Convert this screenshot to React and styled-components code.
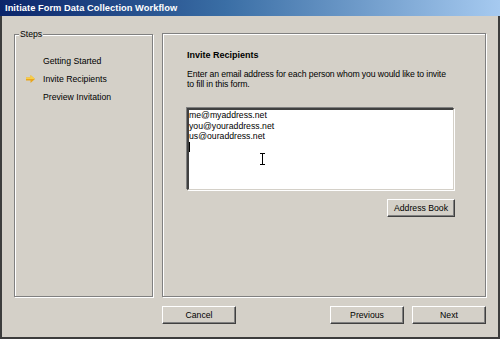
import React from 'react';
import styled, { createGlobalStyle } from 'styled-components';

const Global = createGlobalStyle`
  html, body { margin: 0; padding: 0; background: #d4d0c8; }
  body { font-family: "Liberation Sans", Arial, sans-serif; }
`;

const FACE = '#d4d0c8';

export default function App() {
  return (
    <>
      <Global />
      <Window>
        <TitleBar>Initiate Form Data Collection Workflow</TitleBar>
        <Body>
          <StepsBox>
            <Legend>Steps</Legend>
            <StepList>
              <Step>
                <Marker />
                Getting Started
              </Step>
              <Step>
                <Marker>
                  <svg width="9" height="8" viewBox="0 0 9 8">
                    <path d="M0 2.5h4.5V0L9 4 4.5 8V5.5H0z" fill="#e9a51c" />
                    <path d="M0 2.5h4.5V0L9 4H0z" fill="#f7cf4a" />
                  </svg>
                </Marker>
                Invite Recipients
              </Step>
              <Step>
                <Marker />
                Preview Invitation
              </Step>
            </StepList>
          </StepsBox>

          <Panel>
            <Heading>Invite Recipients</Heading>
            <Description>
              Enter an email address for each person whom you would like to invite
              <br />
              to fill in this form.
            </Description>
            <AddressField>
              <Line>me@myaddress.net</Line>
              <Line>you@youraddress.net</Line>
              <Line>us@ouraddress.net</Line>
              <Line>
                <Caret />
              </Line>
              <IBeam width="7" height="12" viewBox="0 0 7 12">
                <path d="M1 0.5h5M3.5 0.5v11M1 11.5h5" stroke="#000" strokeWidth="1" fill="none" />
              </IBeam>
            </AddressField>
            <FieldActions>
              <Button $width={68}>Address Book</Button>
            </FieldActions>
          </Panel>

          <Footer>
            <Button $width={74}>Cancel</Button>
            <Spacer />
            <Button $width={74}>Previous</Button>
            <Button $width={74}>Next</Button>
          </Footer>
        </Body>
      </Window>
    </>
  );
}

const Window = styled.div`
  width: 500px;
  height: 339px;
  box-sizing: border-box;
  display: flex;
  flex-direction: column;
  background: ${FACE};
  border: 2px solid #3c3c3c;
  border-top: none;
  font-size: 8.7px;
  color: #000;
`;

const TitleBar = styled.div`
  height: 16px;
  margin: 0 -2px;
  padding-left: 5px;
  display: flex;
  align-items: center;
  background: linear-gradient(to right, #0a246a 0%, #3a6ea5 45%, #a6caf0 100%);
  color: #fff;
  font-weight: bold;
  font-size: 9.3px;
  letter-spacing: 0.05px;
`;

const Body = styled.div`
  flex: 1;
  display: grid;
  grid-template-columns: 139px 1fr;
  grid-template-rows: 264px 18px;
  column-gap: 9px;
  row-gap: 9px;
  padding: 17px 12px 13px 12px;
`;

const etched = `
  border: 1px solid #808080;
  box-shadow: inset 1px 1px 0 #fff, 1px 1px 0 #fff;
`;

const StepsBox = styled.div`
  position: relative;
  margin-top: 1px;
  ${etched}
`;

const Legend = styled.span`
  position: absolute;
  top: -6px;
  left: 4px;
  padding: 0 1px;
  line-height: 11px;
  background: ${FACE};
`;

const StepList = styled.ul`
  list-style: none;
  margin: 0;
  padding: 17px 0 0 11px;
`;

const Step = styled.li`
  display: flex;
  align-items: center;
  height: 18px;
`;

const Marker = styled.span`
  width: 17px;
  display: flex;
  align-items: center;
`;

const Panel = styled.div`
  ${etched}
  padding: 15px 31px 0 24px;
`;

const Heading = styled.div`
  font-weight: bold;
  line-height: 12px;
  font-size: 9px;
`;

const Description = styled.p`
  margin: 8px 0 19px;
  line-height: 10px;
  white-space: nowrap;
  letter-spacing: -0.12px;
`;

const AddressField = styled.div`
  position: relative;
  height: 82px;
  box-sizing: border-box;
  background: #fff;
  border-top: 2px solid #404040;
  border-left: 2px solid #404040;
  border-right: 1px solid #d4d0c8;
  border-bottom: 1px solid #d4d0c8;
  box-shadow: -1px -1px 0 #808080, 1px 1px 0 #fff;
`;

const Line = styled.div`
  height: 10.5px;
  line-height: 10.5px;
  white-space: nowrap;
`;

const Caret = styled.span`
  display: inline-block;
  width: 1px;
  height: 10px;
  background: #000;
  vertical-align: top;
`;

const IBeam = styled.svg`
  position: absolute;
  left: 70px;
  top: 43px;
`;

const FieldActions = styled.div`
  display: flex;
  justify-content: flex-end;
  margin-top: 9px;
  margin-right: -1px;
`;

const Button = styled.button`
  width: ${p => p.$width}px;
  height: 18px;
  padding: 0;
  font: inherit;
  color: #000;
  background: ${FACE};
  border: 1px solid;
  border-color: #fff #404040 #404040 #fff;
  box-shadow: inset -1px -1px 0 #808080;
`;

const Footer = styled.div`
  grid-column: 2;
  display: flex;
  gap: 8px;
`;

const Spacer = styled.div`
  flex: 1;
`;
